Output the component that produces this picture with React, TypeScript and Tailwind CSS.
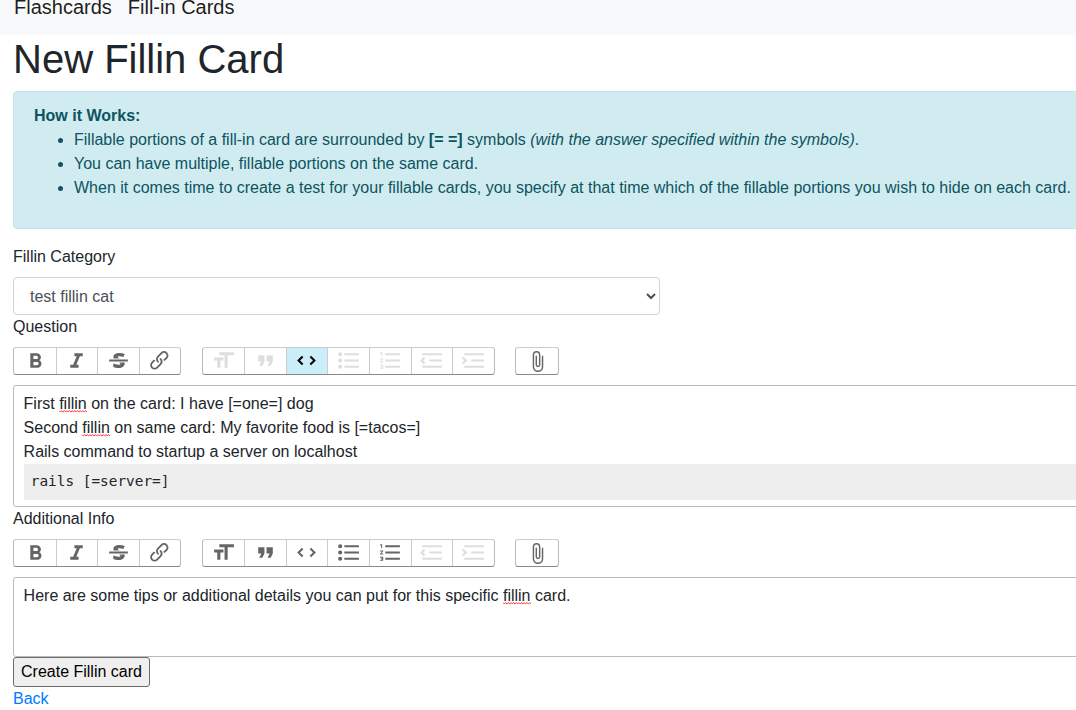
import type { ReactNode } from 'react';

const icons = {
  bold: 'M15.6 11.8c1-.7 1.6-1.8 1.6-2.8a4 4 0 0 0-4-4H7v14h7c2.1 0 3.7-1.7 3.7-3.8 0-1.5-.8-2.8-2.1-3.4zM10 7.5h3a1.5 1.5 0 1 1 0 3h-3v-3zm3.5 9H10v-3h3.5a1.5 1.5 0 1 1 0 3z',
  italic: 'M10 5v3h2.2l-3.4 8H6v3h8v-3h-2.2l3.4-8H18V5h-8z',
  strike: 'M12.73 14l.28.14c.26.15.45.3.57.44.12.14.18.3.18.5 0 .3-.15.56-.44.75-.3.2-.76.3-1.39.3A13.52 13.52 0 0 1 7 14.95v3.37a10.64 10.64 0 0 0 4.84.88c1.26 0 2.35-.19 3.28-.56.93-.37 1.64-.9 2.14-1.57s.74-1.45.74-2.32c0-.26-.02-.51-.06-.75h-5.21zm-5.5-4c-.08-.34-.12-.7-.12-1.1 0-1.29.52-2.3 1.58-3.02 1.05-.72 2.5-1.08 4.34-1.08 1.62 0 3.28.34 4.97 1l-1.3 2.93c-1.47-.6-2.73-.9-3.8-.9-.55 0-.96.08-1.2.26-.26.17-.38.38-.38.64 0 .27.16.52.48.74.17.12.53.3 1.05.53H7.23zM3 13h18v-2H3v2z',
  link: 'M9.88 13.7a4.3 4.3 0 0 1 0-6.07l3.37-3.37a4.26 4.26 0 0 1 6.07 0 4.3 4.3 0 0 1 0 6.06l-1.96 1.72a.91.91 0 1 1-1.3-1.3l1.97-1.71a2.46 2.46 0 0 0-3.48-3.48l-3.38 3.37a2.46 2.46 0 0 0 0 3.48.91.91 0 1 1-1.3 1.3zM4.25 19.46a4.3 4.3 0 0 1 0-6.07l1.93-1.9a.91.91 0 1 1 1.3 1.3l-1.93 1.9a2.46 2.46 0 0 0 3.48 3.48l3.37-3.38c.96-.96.96-2.52 0-3.48a.91.91 0 1 1 1.3-1.3 4.3 4.3 0 0 1 0 6.07l-3.38 3.38a4.26 4.26 0 0 1-6.07 0z',
  heading: 'M12 9v3H9v7H6v-7H3V9h9zM8 4h14v3h-6v12h-3V7H8V4z',
  quote: 'M6 17h3l2-4V7H5v6h3zm8 0h3l2-4V7h-6v6h3z',
  code: 'M18.2 12L15 15.2l1.4 1.4L21 12l-4.6-4.6L15 8.8l3.2 3.2zM5.8 12L9 8.8 7.6 7.4 3 12l4.6 4.6L9 15.2 5.8 12z',
  bullets: 'M4 4a2 2 0 1 0 0 4 2 2 0 0 0 0-4zm0 6a2 2 0 1 0 0 4 2 2 0 0 0 0-4zm0 6a2 2 0 1 0 0 4 2 2 0 0 0 0-4zm4 3h14v-2H8v2zm0-6h14v-2H8v2zm0-8v2h14V5H8z',
  numbers: 'M2 17h2v.5H3v1h1v.5H2v1h3v-4H2v1zm1-9h1V4H2v1h1v3zm-1 3h1.8L2 13.1v.9h3v-1H3.2L5 10.9V10H2v1zm5-6v2h14V5H7zm0 14h14v-2H7v2zm0-6h14v-2H7v2z',
  outdent: 'M3 19h19v-2H3v2zm7-6h12v-2H10v2zm-8.3-.3l2.8 2.9L6 14.2 4 12l2-2-1.4-1.5L1 12l.7.7zM3 5v2h19V5H3z',
  indent: 'M3 19h19v-2H3v2zm7-6h12v-2H10v2zm-6.9-1L1 14.2l1.4 1.4L6 12l-.7-.7-2.8-2.8L1 9.9 3.1 12zM3 5v2h19V5H3z',
  attach: 'M16.5 6v11.5a4 4 0 1 1-8 0V5a2.5 2.5 0 0 1 5 0v10.5a1 1 0 1 1-2 0V6H10v9.5a2.5 2.5 0 0 0 5 0V5a4 4 0 1 0-8 0v12.5a5.5 5.5 0 0 0 11 0V6h-1.5z',
};

type IconName = keyof typeof icons;
type State = 'normal' | 'disabled' | 'active';

function ToolButton({ name, state = 'normal' }: { name: IconName; state?: State }) {
  const tone = state === 'active' ? 'opacity-100' : state === 'disabled' ? 'opacity-[0.125]' : 'opacity-60';
  const size = name === 'attach' ? 'h-[23px] w-[23px] mt-[2px]' : 'h-[25px] w-[25px]';
  const nudge = name === 'bold' || name === 'attach' ? 'pl-px' : name === 'link' || name === 'code' ? 'pr-px' : '';
  return (
    <button
      type="button"
      aria-label={name}
      disabled={state === 'disabled'}
      className={`flex h-[25.6px] w-[41.6px] shrink-0 justify-center border-l border-[#ccc] text-black first:border-l-0 ${nudge} ${state === 'active' ? 'bg-[#cbeefa]' : ''}`}
    >
      <svg viewBox="0 0 24 24" fill="currentColor" className={`shrink-0 ${size} ${tone}`}>
        <path d={icons[name]} />
      </svg>
    </button>
  );
}

function Group({ children }: { children: ReactNode }) {
  return (
    <div className="flex shrink-0 rounded-[3px] border border-[#bbb] border-t-[#ccc] border-b-[#888]">{children}</div>
  );
}

function Toolbar({ inCode = false }: { inCode?: boolean }) {
  const block: State = inCode ? 'disabled' : 'normal';
  return (
    <div className="mb-[10.4px] flex gap-[20.2px]">
      <Group>
        <ToolButton name="bold" />
        <ToolButton name="italic" />
        <ToolButton name="strike" />
        <ToolButton name="link" />
      </Group>
      <Group>
        <ToolButton name="heading" state={block} />
        <ToolButton name="quote" state={block} />
        <ToolButton name="code" state={inCode ? 'active' : 'normal'} />
        <ToolButton name="bullets" state={block} />
        <ToolButton name="numbers" state={block} />
        <ToolButton name="outdent" state="disabled" />
        <ToolButton name="indent" state="disabled" />
      </Group>
      <Group>
        <ToolButton name="attach" />
      </Group>
    </div>
  );
}

function Misspelt({ children }: { children: ReactNode }) {
  return (
    <span className="relative">
      {children}
      <svg viewBox="0 0 28 3" className="absolute bottom-[-1px] left-0 h-[3px] w-[28px]" fill="none" stroke="#f00" strokeWidth="0.7">
        <path d="M0 .5l1.33 1.6 1.33-1.6 1.33 1.6 1.33-1.6 1.33 1.6 1.33-1.6 1.33 1.6 1.33-1.6 1.33 1.6 1.33-1.6 1.33 1.6 1.33-1.6 1.33 1.6 1.33-1.6 1.33 1.6 1.33-1.6 1.33 1.6 1.33-1.6 1.33 1.6 1.33-1.6 1.33 1.6" />
      </svg>
    </span>
  );
}

export default function App() {
  return (
    <div className="h-[710px] w-full overflow-hidden bg-white font-['Liberation_Sans',Arial,sans-serif] text-base leading-6 text-[#212529]">
      <nav className="flex h-[35px] items-end gap-4 overflow-hidden bg-[#f8f9fa] pb-[13px] pl-[14px] text-xl leading-[30px] text-black/90">
        <a>Flashcards</a>
        <a>Fill-in Cards</a>
      </nav>
      <main className="w-[1340px] pl-[13px]">
        <h1 className="mb-2 text-[40px] leading-[48px]">New Fillin Card</h1>
        <div className="mb-4 rounded border border-[#bee5eb] bg-[#d1ecf1] px-5 py-3 text-[#0c5460]">
          <b>How it Works:</b>
          <ul className="mb-4 list-disc pl-10">
            <li>
              Fillable portions of a fill-in card are surrounded by <b>[= =]</b> symbols{' '}
              <i>(with the answer specified within the symbols)</i>.
            </li>
            <li>You can have multiple, fillable portions on the same card.</li>
            <li>
              When it comes time to create a test for your fillable cards, you specify at that time which of the
              fillable portions you wish to hide on each card.
            </li>
          </ul>
        </div>
        <label className="mb-2 block">Fillin Category</label>
        <select className="block h-[38px] w-[647px] rounded border border-[#ced4da] bg-white px-3 py-1.5 text-[#495057]">
          <option>test fillin cat</option>
        </select>
        <label className="mb-2 block">Question</label>
        <Toolbar inCode />
        <div className="h-[122px] rounded-[3px] border border-[#bbb] px-[9.6px] py-[6px]">
          <div>First <Misspelt>fillin</Misspelt> on the card: I have [=one=] dog</div>
          <div>Second <Misspelt>fillin</Misspelt> on same card: My favorite food is [=tacos=]</div>
          <div>Rails command to startup a server on localhost</div>
          <pre className="bg-[#eee] p-[7.2px] font-['DejaVu_Sans_Mono',monospace] text-[14.4px] leading-[21.6px]">rails [=server=]</pre>
        </div>
        <label className="mb-2 block">Additional Info</label>
        <Toolbar />
        <div className="h-20 rounded-[3px] border border-[#bbb] px-[9.6px] py-[6px]">
          Here are some tips or additional details you can put for this specific <Misspelt>fillin</Misspelt> card.
        </div>
        <button type="button" className="block h-[30px] rounded-[3px] border border-[#6b6b6b] bg-[#efefef] px-[7px] text-black">
          Create Fillin card
        </button>
        <a className="block text-[#007bff]">Back</a>
      </main>
    </div>
  );
}
